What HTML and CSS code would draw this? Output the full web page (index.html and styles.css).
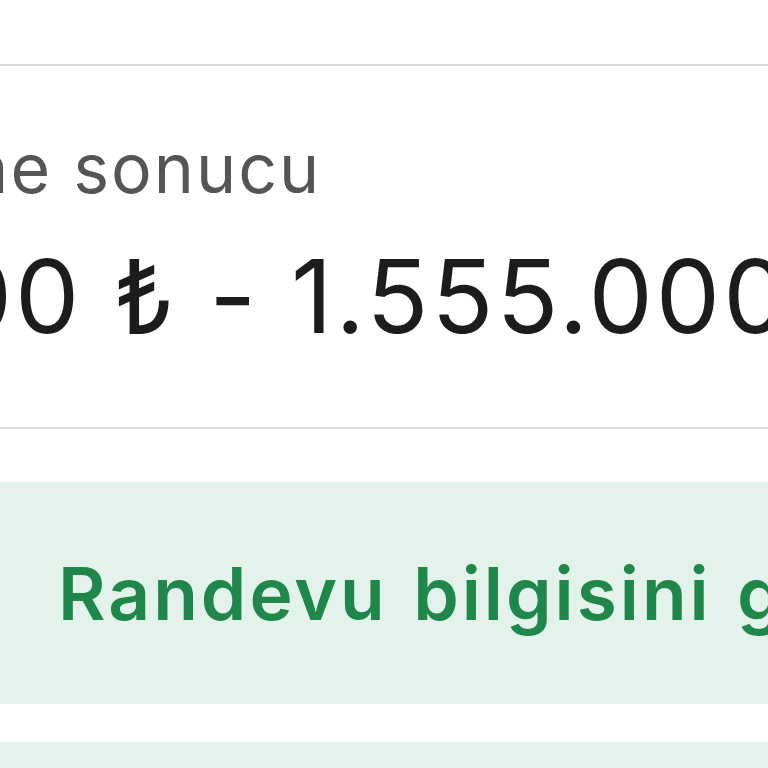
FILE: index.html
```html
<!DOCTYPE html>
<html lang="tr">
<head>
  <meta charset="UTF-8">
  <meta name="viewport" content="width=device-width, initial-scale=1.0">
  <title>Değerleme sonucu</title>
  <link rel="stylesheet" href="styles.css">
</head>
<body>

<div class="page">
  <div class="header"></div>

  <div class="result">
    <div class="result-label">Değerleme sonucu</div>
    <div class="result-price">1.450.000 ₺ - 1.555.000 ₺</div>
  </div>

  <div class="actions">
    <button class="action">Randevu bilgisini gör</button>
    <button class="action"></button>
  </div>
</div>

</body>
</html>
```

FILE: styles.css
```css
html, body {
  margin: 0;
  height: 100%;
  overflow: hidden;
  background-color: #fff;
}
body {
  font-family: Inter, "Noto Sans", sans-serif;
}
.page {
  width: 768px;
  height: 768px;
  overflow: hidden;
}
.header {
  height: 64px;
  border-bottom: 2px solid #dadada;
}
.result {
  height: 361px;
  border-bottom: 2px solid #dadada;
  white-space: nowrap;
  overflow: hidden;
}
.result-label {
  margin-left: -318px;
  padding-top: 68px;
  font-size: 68px;
  line-height: 68px;
  letter-spacing: 2px;
  color: #555;
}
.result-price {
  margin-left: -425px;
  margin-top: 43px;
  font-size: 102px;
  line-height: 102px;
  letter-spacing: 3px;
  color: #1c1c1c;
}
.actions {
  padding-top: 53px;
  display: flex;
  flex-direction: column;
  gap: 38px;
}
.action {
  display: block;
  flex-shrink: 0;
  width: 100%;
  height: 222px;
  border: none;
  border-radius: 0;
  padding: 0 0 0 58px;
  background-color: #e3f2ea;
  color: #1f874a;
  font-family: Inter, "Noto Sans", sans-serif;
  font-size: 73px;
  font-weight: 600;
  letter-spacing: 3px;
  word-spacing: 4px;
  text-align: left;
  white-space: nowrap;
  overflow: hidden;
}
```
